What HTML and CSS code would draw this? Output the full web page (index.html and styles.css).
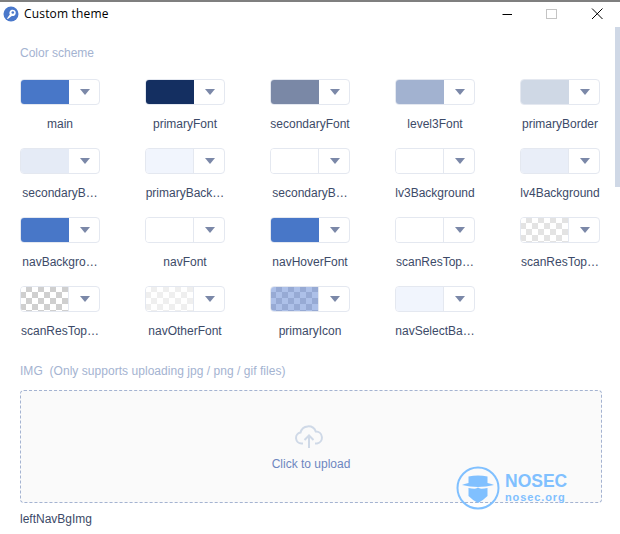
FILE: index.html
```html
<!DOCTYPE html>
<html lang="en">
<head>
<meta charset="utf-8">
<title>Custom theme</title>
<link rel="stylesheet" href="styles.css">
</head>
<body>
<div class="window">
  <header class="titlebar">
    <svg class="app-icon" width="16" height="16" viewBox="0 0 16 16">
      <circle cx="8" cy="8" r="7.500" fill="#4a78cb"/>
      <path d="M4 12.500 L6.800 8.500 A3.200 3.200 0 1 1 8.800 10 L4.800 13 Z" fill="#fff"/>
      <circle cx="9.800" cy="6.500" r="1.300" fill="#4a78cb"/>
    </svg>
    <span class="title">Custom theme</span>
    <div class="controls">
      <svg width="12" height="12" viewBox="0 0 12 12"><path d="M1.500 6.500H11" stroke="#000" fill="none"/></svg>
      <svg width="12" height="12" viewBox="0 0 12 12"><rect x="0.500" y="1.500" width="10" height="9" stroke="#c4c4c4" fill="none"/></svg>
      <svg width="12" height="12" viewBox="0 0 12 12"><path d="M1 0.500L11.500 11M11.500 0.500L1 11" stroke="#000" fill="none"/></svg>
    </div>
  </header>
  <main class="content">
    <h2 class="section-title">Color scheme</h2>
    <div class="swatch-grid">
      <div class="item"><div class="picker"><span class="color c-main"></span><span class="arrow"></span></div><p class="label">main</p></div>
      <div class="item"><div class="picker"><span class="color c-navy"></span><span class="arrow"></span></div><p class="label">primaryFont</p></div>
      <div class="item"><div class="picker"><span class="color c-slate"></span><span class="arrow"></span></div><p class="label">secondaryFont</p></div>
      <div class="item"><div class="picker"><span class="color c-lv3"></span><span class="arrow"></span></div><p class="label">level3Font</p></div>
      <div class="item"><div class="picker"><span class="color c-border"></span><span class="arrow"></span></div><p class="label">primaryBorder</p></div>

      <div class="item"><div class="picker"><span class="color c-secb"></span><span class="arrow"></span></div><p class="label">secondaryB…</p></div>
      <div class="item"><div class="picker"><span class="color c-pale"></span><span class="arrow"></span></div><p class="label">primaryBack…</p></div>
      <div class="item"><div class="picker"><span class="color c-white"></span><span class="arrow"></span></div><p class="label">secondaryB…</p></div>
      <div class="item"><div class="picker"><span class="color c-white"></span><span class="arrow"></span></div><p class="label">lv3Background</p></div>
      <div class="item"><div class="picker"><span class="color c-lv4"></span><span class="arrow"></span></div><p class="label">lv4Background</p></div>

      <div class="item"><div class="picker"><span class="color c-main"></span><span class="arrow"></span></div><p class="label">navBackgro…</p></div>
      <div class="item"><div class="picker"><span class="color c-white"></span><span class="arrow"></span></div><p class="label">navFont</p></div>
      <div class="item"><div class="picker"><span class="color c-main"></span><span class="arrow"></span></div><p class="label">navHoverFont</p></div>
      <div class="item"><div class="picker"><span class="color c-white"></span><span class="arrow"></span></div><p class="label">scanResTop…</p></div>
      <div class="item"><div class="picker"><span class="color c-check-light"></span><span class="arrow"></span></div><p class="label">scanResTop…</p></div>

      <div class="item"><div class="picker"><span class="color c-check-gray"></span><span class="arrow"></span></div><p class="label">scanResTop…</p></div>
      <div class="item"><div class="picker"><span class="color c-check-faint"></span><span class="arrow"></span></div><p class="label">navOtherFont</p></div>
      <div class="item"><div class="picker"><span class="color c-check-blue"></span><span class="arrow"></span></div><p class="label">primaryIcon</p></div>
      <div class="item"><div class="picker"><span class="color c-pale"></span><span class="arrow"></span></div><p class="label">navSelectBa…</p></div>
    </div>
    <h2 class="section-title img-title">IMG&nbsp;&nbsp;(Only supports uploading jpg / png / gif files)</h2>
    <div class="upload">
      <svg class="cloud" width="30" height="24" viewBox="0 0 30 24">
        <path d="M9 18.500H7.500A5.500 5.500 0 0 1 6.500 7.600 A8 8 0 0 1 21.800 6.600 A6 6 0 0 1 23 18.500H21" fill="none" stroke="#cfd9e7" stroke-width="2"/>
        <path d="M15 23V10.500M10.500 15L15 10.500L19.500 15" fill="none" stroke="#cfd9e7" stroke-width="2"/>
      </svg>
      <span class="upload-text">Click to upload</span>
    </div>
    <p class="img-name">leftNavBgImg</p>
  </main>
  <div class="scrollbar"></div>
  <div class="watermark">
    <svg width="44" height="44" viewBox="0 0 44 44">
      <circle cx="22" cy="22" r="20.500" fill="none" stroke="#80c0ff" stroke-width="2"/>
      <path d="M12.500 10.500Q22 8.500 31.500 10.500V17Q36 18 38 19Q22 23 6 19Q8 18 12.500 17Z" fill="#80c0ff"/>
      <path d="M12.500 22Q18 23 20 22.500L22 21.500L24 22.500Q26 23 31.500 22V30Q27 34.500 22 37Q17 34.500 12.500 30Z" fill="#80c0ff"/>
    </svg>
    <div class="wm-text">
      <span class="wm-name">NOSEC</span>
      <span class="wm-url">nosec.org</span>
    </div>
  </div>
</div>
</body>
</html>
```
FILE: styles.css
```css
* { box-sizing: border-box; }
html, body { margin: 0; padding: 0; }
body { width: 620px; height: 534px; overflow: hidden; background: #fff; font-family: "Liberation Sans", Arial, sans-serif; }
.window { position: relative; width: 620px; height: 534px; border-top: 2px solid #7f7f7f; display: flex; flex-direction: column; }
.titlebar { height: 25px; flex: none; display: flex; align-items: center; padding: 0 0 2px 3px; }
.app-icon { flex: none; }
.title { margin-left: 5px; font-family: "Open Sans", "Liberation Sans", sans-serif; font-size: 12px; letter-spacing: 0.17px; color: #000; }
.controls { margin-left: auto; display: flex; gap: 33px; padding-right: 17px; }
.controls svg { display: block; }
.content { padding: 19px 18px 0 20px; }
.section-title { margin: 0; font-size: 12px; line-height: 14px; font-weight: 400; color: #a4b3d1; }
.swatch-grid { margin-top: 19px; display: grid; grid-template-columns: repeat(5, 80px); column-gap: 45px; row-gap: 17px; }
.item { width: 80px; }
.picker { height: 26px; display: flex; border: 1px solid #e4e8f0; border-radius: 4px; overflow: hidden; background: #fff; }
.color { width: 49px; flex: none; border-right: 1px solid #e4e8f0; margin: -1px 0 -1px -1px; }
.arrow { flex: 1; position: relative; }
.arrow::after { content: ""; position: absolute; left: 50%; top: 9px; margin-left: -4px; border-style: solid; border-width: 6px 5px 0; border-color: #7b88a8 transparent transparent; }
.label { margin: 12px -6px 0; height: 14px; font-size: 12px; line-height: 14px; color: #3c4a68; text-align: center; white-space: nowrap; }
.c-main { background: #4877c8; border-color: #4877c8; }
.c-navy { background: #142f61; border-color: #142f61; }
.c-slate { background: #7a88a6; border-color: #7a88a6; }
.c-lv3 { background: #a2b2d0; border-color: #a2b2d0; }
.c-border { background: #cfd8e5; border-color: #cfd8e5; }
.c-secb { background: #e5ebf6; border-color: #e5ebf6; }
.c-pale { background: #f1f5fd; }
.c-lv4 { background: #e9eef8; }
.c-white { background: #fff; }
.c-check-gray { background: conic-gradient(#cfcfcf 25%, #fff 0 50%, #cfcfcf 0 75%, #fff 0) 0 0 / 12px 12px; }
.c-check-light { background: conic-gradient(#e3e3e3 25%, #fff 0 50%, #e3e3e3 0 75%, #fff 0) 0 0 / 12px 12px; }
.c-check-faint { background: conic-gradient(#efefef 25%, #fff 0 50%, #efefef 0 75%, #fff 0) 0 0 / 12px 12px; }
.c-check-blue { background: conic-gradient(#97aad4 25%, #adc0e8 0 50%, #97aad4 0 75%, #adc0e8 0) 0 0 / 12px 12px; }
.img-title { margin-top: 26px; letter-spacing: 0.04px; }
.upload { margin-top: 12px; height: 113px; width: 582px; background: #fafafa; border: 1px dashed #a4b3d1; border-radius: 4px; display: flex; flex-direction: column; align-items: center; padding-top: 34px; }
.cloud { display: block; margin-left: -4px; }
.upload-text { margin-top: 8px; font-size: 12px; line-height: 14px; color: #6d86c0; }
.img-name { margin: 9px 0 0; font-size: 12px; line-height: 14px; color: #3c4a68; }
.scrollbar { position: absolute; top: 25px; right: 0; width: 5px; height: 160px; background: #cfd8e6; }
.watermark { position: absolute; left: 456px; top: 464px; display: flex; align-items: center; gap: 5px; }
.wm-text { display: flex; flex-direction: column; padding-bottom: 2px; font-weight: 700; color: #80c0ff; }
.wm-name { font-size: 17.500px; line-height: 20px; }
.wm-url { font-size: 11px; line-height: 13px; letter-spacing: 0.9px; }
```
